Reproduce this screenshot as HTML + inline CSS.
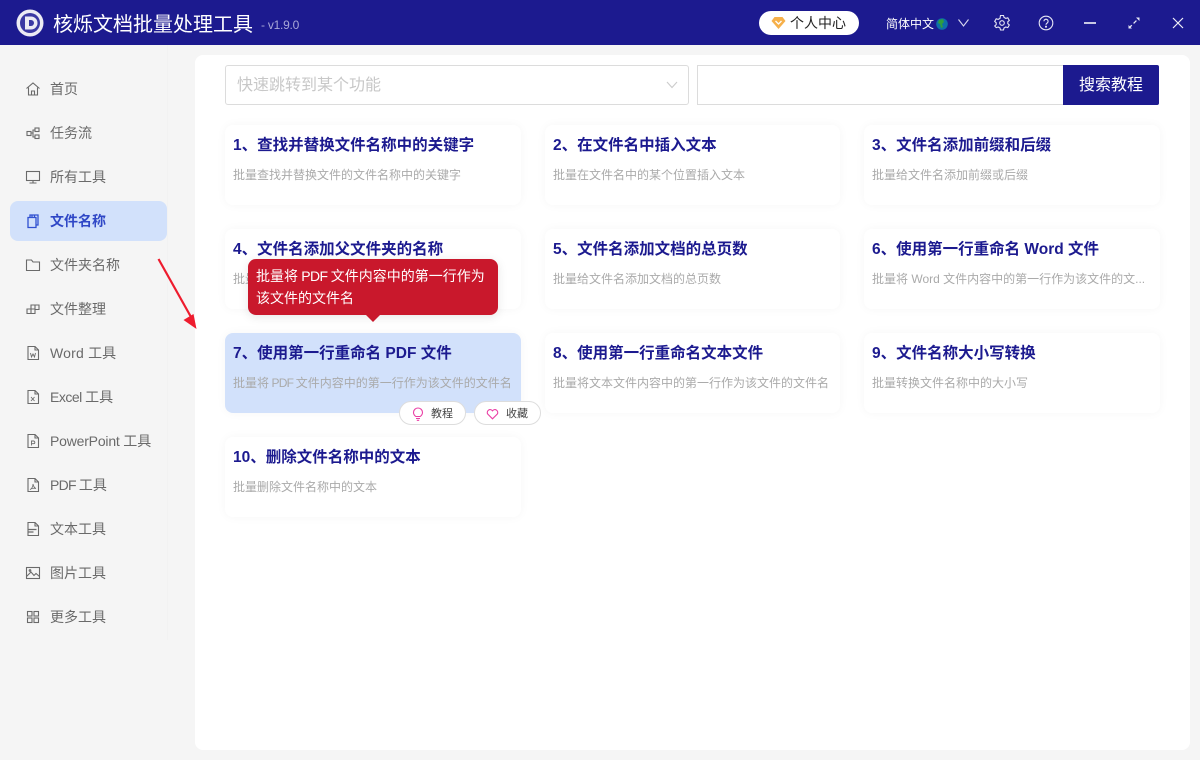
<!DOCTYPE html>
<html lang="zh"><head><meta charset="utf-8"><style>
*{box-sizing:border-box;margin:0;padding:0}
html,body{width:1200px;height:760px;overflow:hidden;background:#f5f5f5;font-family:"Liberation Sans","Noto Sans CJK SC",sans-serif}
.a{position:absolute;white-space:nowrap}
#hd{left:0;top:0;width:1200px;height:45px;background:#1c1a8f}
#panel{left:195px;top:55px;width:995px;height:695px;background:#fff;border-radius:8px}
#div{left:167px;top:45px;width:1px;height:595px;background:#f2f2f2}
.nav{position:absolute;left:50px;font-size:14px;line-height:20px;color:#6a6a6a;white-space:nowrap}
.ic{position:absolute;left:25px;width:16px;height:16px;fill:none;stroke:#6a6a6a;stroke-width:1.1}
.card{position:absolute;height:80px;background:#fff;border-radius:8px;box-shadow:0 0 10px rgba(0,0,0,.04)}
.card b{position:absolute;left:8px;top:10px;font-size:15.5px;line-height:22px;color:#1c1a8f;white-space:nowrap;font-weight:700}
.card span{position:absolute;left:8px;top:40.5px;font-size:12px;line-height:18px;color:#aaa;white-space:nowrap}
.card span i{position:static;font-style:normal;letter-spacing:-.8px}
.pill{position:absolute;top:401px;height:24px;background:#fff;border:1px solid #ddd;border-radius:12px;font-size:11px;line-height:25px;color:#444}
</style></head><body>
<div class="a" id="hd"></div>
<div class="a" id="panel"></div>
<div class="a" id="div"></div>

<svg class="a" style="left:16px;top:9px" width="28" height="28" viewBox="0 0 28 28"><circle cx="14" cy="14" r="13.5" fill="#ecebf4"/><circle cx="14" cy="14" r="10" fill="#3b39a3"/><path d="M9 7.500H15a6.500 6.500 0 0 1 0 13H9Z" fill="#ecebf4"/><path d="M13 11h2a3 3 0 0 1 0 6h-2Z" fill="#3b39a3"/></svg>
<div class="a" style="left:53px;top:10px;font-size:20px;line-height:30px;color:#fff">核烁文档批量处理工具</div>
<div class="a" style="left:261px;top:16px;font-size:12px;line-height:18px;color:#a9a8d8;letter-spacing:-.25px">- v1.9.0</div>

<div class="a" style="left:759px;top:11px;width:100px;height:24px;background:#fff;border-radius:12px"></div>
<svg class="a" style="left:771px;top:16px" width="15" height="14" viewBox="0 0 15 14"><path d="M3.500 1h8l3 4-7 8-7-8Z" fill="#f6b04a"/><path d="M4.500 5l3 3 3-3" fill="none" stroke="#fff" stroke-width="1.300"/></svg>
<div class="a" style="left:790px;top:13px;font-size:14px;line-height:20px;color:#222">个人中心</div>
<div class="a" style="left:886px;top:15px;font-size:12px;line-height:18px;color:#fff">简体中文</div>
<svg class="a" style="left:936px;top:18px" width="12" height="12" viewBox="0 0 12 12"><circle cx="6" cy="6" r="5.800" fill="#0e6fa8"/><path d="M3 2l4-1 1 3-2 2 1 3-2 1-1-4-2-1Z" fill="#2f9e3e"/></svg>
<svg class="a" style="left:957px;top:17px" width="13" height="12" viewBox="0 0 13 12"><path d="M1.500 2.500 6.500 9l5-6.500" fill="none" stroke="#d8d8ee" stroke-width="1.100"/></svg>
<svg class="a" style="left:994px;top:15px" width="16" height="16" viewBox="0 0 16 16" fill="none" stroke="#e6e6f4" stroke-width="1.100"><path d="M6.500 1.200h3l.5 2 1.800 1 2-.6 1.500 2.600-1.500 1.400v1.800l1.500 1.400-1.500 2.600-2-.6-1.800 1-.5 2h-3l-.5-2-1.800-1-2 .6L.7 11.800l1.500-1.400V8.600L.7 7.200l1.500-2.600 2 .6 1.800-1Z" transform="translate(0 -.8)"/><circle cx="8" cy="8" r="2.300"/></svg>
<svg class="a" style="left:1038px;top:15px" width="16" height="16" viewBox="0 0 16 16" fill="none" stroke="#e6e6f4" stroke-width="1.100"><circle cx="8" cy="8" r="6.800"/><path d="M5.900 6.300a2.100 2.100 0 1 1 3.200 1.800c-.8.500-1.100.9-1.100 1.700"/><circle cx="8" cy="11.700" r=".5" fill="#e6e6f4"/></svg>
<div class="a" style="left:1084px;top:22px;width:12px;height:1.500px;background:#c8c8e4"></div>
<svg class="a" style="left:1127px;top:16px" width="14" height="14" viewBox="0 0 14 14"><path d="M2 12 12 2" stroke="#e6e6f4" stroke-width="1.300" stroke-dasharray="4 2.500" fill="none"/><path d="M9 1.500h3.500V5Z M1.500 9v3.500H5Z" fill="#e6e6f4"/></svg>
<svg class="a" style="left:1172px;top:17px" width="12" height="12" viewBox="0 0 12 12"><path d="M1 1l10 10M11 1 1 11" stroke="#f0f0f8" stroke-width="1.200"/></svg>

<div class="a" style="left:10px;top:201px;width:157px;height:40px;background:#d2e1fb;border-radius:8px"></div>

<svg class="ic" style="top:81px" viewBox="0 0 16 16"><path d="M1.500 7.500 8 2l6.500 5.500M3.500 6.500V14h9V6.500M6.500 14v-4h3v4"/></svg>
<div class="nav" style="top:79px">首页</div>
<svg class="ic" style="top:125px" viewBox="0 0 16 16"><rect x="2" y="6.500" width="4" height="4"/><rect x="10" y="3" width="4" height="3.500"/><rect x="10" y="10" width="4" height="3.500"/><path d="M6 8h2V5h2M8 8v4h2"/></svg>
<div class="nav" style="top:123px">任务流</div>
<svg class="ic" style="top:169px" viewBox="0 0 16 16"><rect x="1.500" y="2.500" width="13" height="9"/><path d="M8 11.500V14M4.500 14h7"/></svg>
<div class="nav" style="top:167px">所有工具</div>
<svg class="ic" style="top:213px;stroke:#3050d0;stroke-width:1.300" viewBox="0 0 16 16"><path d="M3 4.500h8v10H3ZM5 4.500V2h8v10h-2M7 2V4.500M9.500 2v2.500"/></svg>
<div class="nav" style="top:211px;color:#2f47c6;font-weight:700">文件名称</div>
<svg class="ic" style="top:257px" viewBox="0 0 16 16"><path d="M1.500 3h5l1.500 2h6.500v8.500h-13Z"/></svg>
<div class="nav" style="top:255px">文件夹名称</div>
<svg class="ic" style="top:301px" viewBox="0 0 16 16"><path d="M2 8h4v4.500H2ZM6 8h4v4.500H6ZM6 8V4h4v4M10 4h4v4.500h-4"/></svg>
<div class="nav" style="top:299px">文件整理</div>
<svg class="ic" style="top:345px" viewBox="0 0 16 16"><path d="M3 1.500h7l3.500 3.500v9.500H3ZM10 1.500V5h3.500"/><path d="M5.500 8l1 4 1.500-3 1.500 3 1-4" stroke-width=".9"/></svg>
<div class="nav" style="top:343px"><span style="letter-spacing:.2px">Word </span>工具</div>
<svg class="ic" style="top:389px" viewBox="0 0 16 16"><path d="M3 1.500h7l3.500 3.500v9.500H3ZM10 1.500V5h3.500"/><path d="M6 8l3.500 4M9.500 8 6 12" stroke-width=".9"/></svg>
<div class="nav" style="top:387px"><span style="letter-spacing:-.5px">Excel </span>工具</div>
<svg class="ic" style="top:433px" viewBox="0 0 16 16"><path d="M3 1.500h7l3.500 3.500v9.500H3ZM10 1.500V5h3.500"/><path d="M6.500 12.500V8h2a1.300 1.300 0 0 1 0 2.700h-2" stroke-width=".9"/></svg>
<div class="nav" style="top:431px"><span style="letter-spacing:-.2px">PowerPoint </span>工具</div>
<svg class="ic" style="top:477px" viewBox="0 0 16 16"><path d="M3 1.500h7l3.500 3.500v9.500H3ZM10 1.500V5h3.500"/><path d="M8 7c0 3-1.500 5-3 5.500 2-1.500 4-1.500 6-1-1.500-.5-2.500-2-3-4.500" stroke-width=".8"/></svg>
<div class="nav" style="top:475px"><span style="letter-spacing:-.75px">PDF </span>工具</div>
<svg class="ic" style="top:521px" viewBox="0 0 16 16"><path d="M3 1.500h7l3.500 3.500v9.500H3ZM10 1.500V5h3.500"/><path d="M3.500 8.500h8M3.500 11h5" stroke-width="1.300"/></svg>
<div class="nav" style="top:519px">文本工具</div>
<svg class="ic" style="top:565px" viewBox="0 0 16 16"><rect x="1.500" y="2.500" width="13" height="11"/><path d="M1.500 11.500 6 7l3 3.500 2-2 3.500 3"/><circle cx="5" cy="5.500" r=".8"/></svg>
<div class="nav" style="top:563px">图片工具</div>
<svg class="ic" style="top:609px" viewBox="0 0 16 16"><rect x="2.500" y="2.500" width="4.500" height="4.500"/><rect x="9" y="2.500" width="4.500" height="4.500"/><rect x="2.500" y="9" width="4.500" height="4.500"/><rect x="9" y="9" width="4.500" height="4.500"/></svg>
<div class="nav" style="top:607px">更多工具</div>

<svg class="a" style="left:150px;top:250px" width="52" height="85" viewBox="0 0 52 85"><path d="M8.500 9 41 67" stroke="#ee1c2e" stroke-width="2.200" fill="none"/><path d="M46.500 79 33.500 70 43.500 64Z" fill="#ee1c2e"/></svg>

<div class="a" style="left:225px;top:65px;width:464px;height:40px;background:#fff;border:1px solid #dcdcdc;border-radius:3px"></div>
<div class="a" style="left:237px;top:74px;font-size:16px;line-height:24px;color:#c8c8c8">快速跳转到某个功能</div>
<svg class="a" style="left:666px;top:80px" width="12" height="10" viewBox="0 0 12 10"><path d="M1 2l5 5.500L11 2" fill="none" stroke="#ccc" stroke-width="1.100"/></svg>
<div class="a" style="left:697px;top:65px;width:367px;height:40px;background:#fff;border:1px solid #dcdcdc;border-right:0"></div>
<div class="a" style="left:1063px;top:65px;width:96px;height:40px;background:#1c1a8f;border-radius:0 2px 2px 0;color:#fff;font-size:16px;line-height:42px;text-align:center">搜索教程</div>

<div class="card" style="left:225px;top:125px;width:296px"><b>1、查找并替换文件名称中的关键字</b><span>批量查找并替换文件的文件名称中的关键字</span></div>
<div class="card" style="left:545px;top:125px;width:295px"><b>2、在文件名中插入文本</b><span>批量在文件名中的某个位置插入文本</span></div>
<div class="card" style="left:864px;top:125px;width:296px"><b>3、文件名添加前缀和后缀</b><span>批量给文件名添加前缀或后缀</span></div>
<div class="card" style="left:225px;top:229px;width:296px"><b>4、文件名添加父文件夹的名称</b><span>批量</span></div>
<div class="card" style="left:545px;top:229px;width:295px"><b>5、文件名添加文档的总页数</b><span>批量给文件名添加文档的总页数</span></div>
<div class="card" style="left:864px;top:229px;width:296px"><b>6、使用第一行重命名 Word 文件</b><span>批量将 Word 文件内容中的第一行作为该文件的文...</span></div>
<div class="card" style="left:225px;top:333px;width:296px;background:#d2e1fb"><b>7、使用第一行重命名 PDF 文件</b><span>批量将<i> PDF </i>文件内容中的第一行作为该文件的文件名</span></div>
<div class="card" style="left:545px;top:333px;width:295px"><b>8、使用第一行重命名文本文件</b><span>批量将文本文件内容中的第一行作为该文件的文件名</span></div>
<div class="card" style="left:864px;top:333px;width:296px"><b>9、文件名称大小写转换</b><span>批量转换文件名称中的大小写</span></div>
<div class="card" style="left:225px;top:437px;width:296px"><b>10、删除文件名称中的文本</b><span>批量删除文件名称中的文本</span></div>

<div class="a" style="left:248px;top:259px;width:250px;height:56px;background:#c9182c;border-radius:8px;box-shadow:0 2px 10px rgba(0,0,0,.1);color:#fff;font-size:14px;line-height:22px;padding:6px 8px">批量将<span style="letter-spacing:-.6px"> PDF </span>文件内容中的第一行作为<br>该文件的文件名</div>
<div class="a" style="left:366px;top:315px;width:0;height:0;border-left:7px solid transparent;border-right:7px solid transparent;border-top:7px solid #c9182c"></div>

<div class="pill" style="left:399px;width:67px"><span style="position:absolute;left:31px;top:0">教程</span><svg style="position:absolute;left:12px;top:5px" width="12" height="14" viewBox="0 0 12 14" fill="none" stroke="#ea3fa5" stroke-width="1.100"><path d="M3.800 9.500C2.500 8.500 1.500 7.300 1.500 5.500a4.500 4.500 0 0 1 9 0c0 1.800-1 3-2.300 4Z"/><path d="M4 11.500h4M4.800 13.300h2.400"/></svg></div>
<div class="pill" style="left:474px;width:67px"><span style="position:absolute;left:31px;top:0">收藏</span><svg style="position:absolute;left:11px;top:6px" width="13" height="12" viewBox="0 0 13 12" fill="none" stroke="#ea3fa5" stroke-width="1.100"><path d="M6.500 10.800 1.800 6.200A2.900 2.900 0 0 1 6.500 2.800a2.900 2.900 0 0 1 4.700 3.400Z"/></svg></div>
</body></html>
